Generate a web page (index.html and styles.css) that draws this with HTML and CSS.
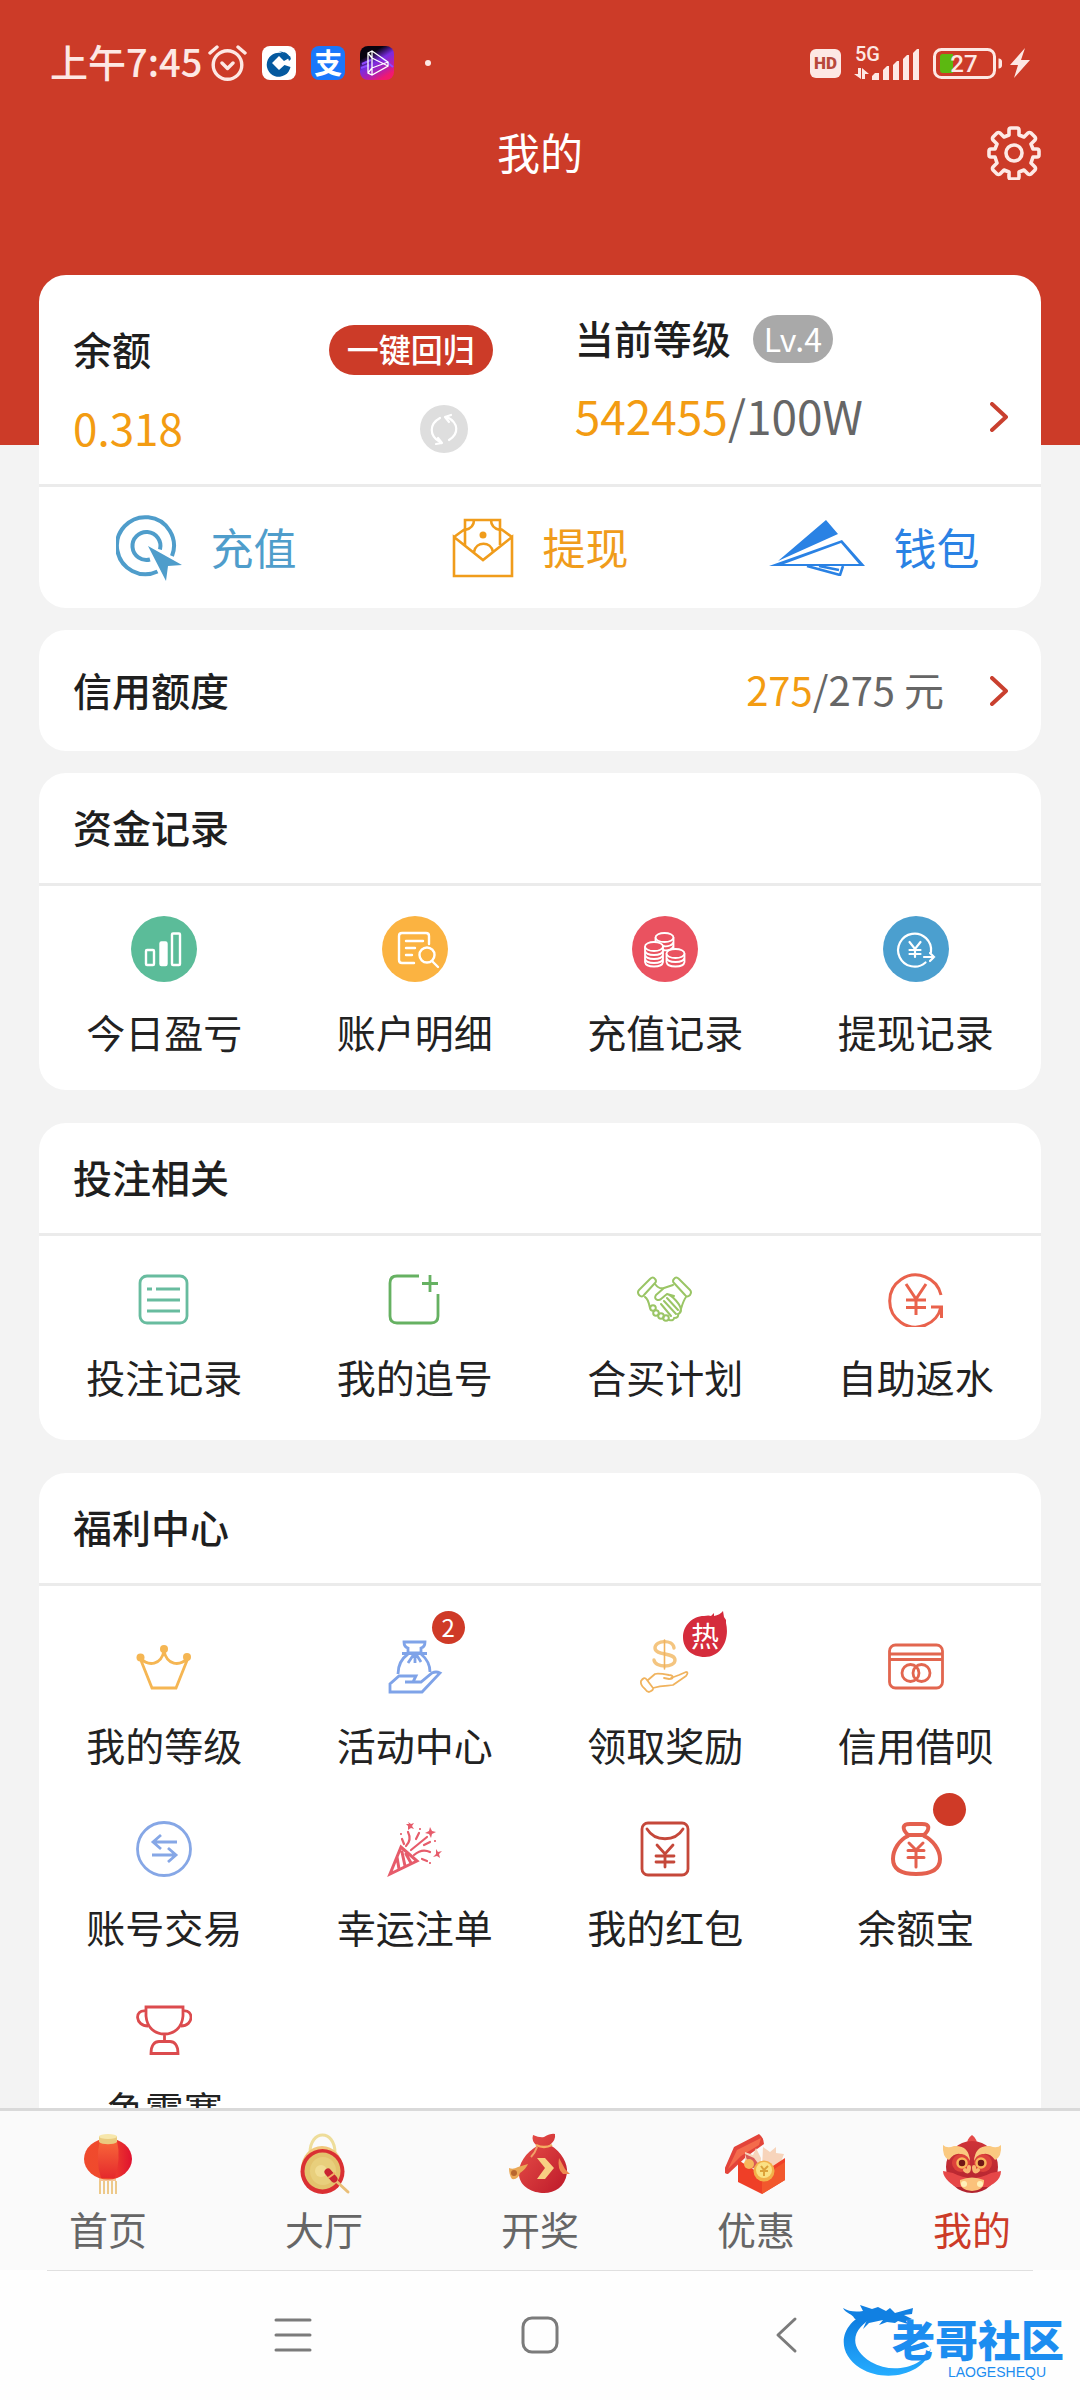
FILE: index.html
```html
<!DOCTYPE html>
<html lang="zh-CN">
<head>
<meta charset="utf-8">
<meta name="viewport" content="width=device-width, initial-scale=1">
<title>我的</title>
<link rel="stylesheet" href="styles.css">
</head>
<body>
<div class="app">
  <div class="screen">
    <header class="header">
      <div class="status">
        <div class="status-left">
          <span class="clock">上午7:45</span>
          <svg class="alarm" width="39" height="36" viewBox="0 0 39 36" fill="none" stroke="currentColor" stroke-width="3.4" stroke-linecap="round" stroke-linejoin="round"><circle cx="19.500" cy="20" r="14.300"/><path d="M2 8 9 2M37 8 30 2M14 18l5.500 5.500L25 18"/></svg>
          <svg width="34" height="34" viewBox="0 0 34 34"><rect width="34" height="34" rx="8" fill="#fff"/><path d="M23 8.500A12 12 0 1 0 28.500 21l-6-2-5.500 5-7-7 7-7 5 5 7-4z" fill="#04599f"/><path d="M17 5.500c4 0 7 1.500 9 4l-2 2c-2-3-4-5-7-6zM22 6c3 1 6 4 7 7l-2 2c-1-4-3-6-5-9z" fill="#04599f"/></svg>
          <span class="app-pay">支</span>
          <svg width="34" height="34" viewBox="0 0 34 34"><defs><linearGradient id="vg" x1="0" y1="0" x2=".6" y2="1"><stop offset=".3" stop-color="#08030f"/><stop offset=".55" stop-color="#7a2be0"/><stop offset=".8" stop-color="#b31fae"/><stop offset="1" stop-color="#f2186f"/></linearGradient></defs><rect width="34" height="34" rx="8" fill="url(#vg)"/><path d="M2 18l9-4M1 22l8-3M22 12l11 9" stroke="#8d4bff" stroke-width="2"/><path d="M8 7l4-2 16 11v4L12 29l-4-2zM12 5v24M12 22l16-6M12 12l16 8M8 7l4 5M8 27l4-5" fill="none" stroke="#fff" stroke-width="1.300"/></svg>
          <span class="dot"></span>
        </div>
        <div class="status-right">
          <span class="hd">HD</span>
          <svg class="signal" width="66" height="36" viewBox="0 0 66 36" fill="currentColor"><text class="net" x="1" y="16">5G</text><path d="M0 29h4v-6h3v11zM8 23l7 6h-4v5H8zM18 35v-4l3-3h4v7zM29 35V25l4-4h2v14zM39 35V20l4-4h2v19zM49 35V14l4-4h2v25zM59 35V8l4-4h2v31z"/></svg>
          <svg class="battery" width="70" height="31" viewBox="0 0 70 31"><rect x="1.500" y="1.500" width="60" height="28" rx="7" fill="none" stroke="currentColor" stroke-width="3"/><path d="M65.500 10.500a3 3 0 0 1 3.500 3v4a3 3 0 0 1-3.500 3z" fill="currentColor"/><path d="M9 6h11v19H9a3 3 0 0 1-2-3V8a3 3 0 0 1 2-2z" fill="#5cb811"/><text class="level" x="31" y="24" text-anchor="middle" fill="currentColor">27</text></svg>
          <svg class="bolt" width="20" height="30" viewBox="0 0 20 30" fill="currentColor"><path d="M15 0 0 17h8L4 30 20 12h-9z"/></svg>
        </div>
      </div>
      <div class="titlebar">
        <h1>我的</h1>
        <button class="icon-button gear" aria-label="设置">
          <svg width="54" height="54" viewBox="0 0 54 54" fill="none" stroke="currentColor" stroke-width="3.600" stroke-linejoin="round"><circle cx="27" cy="27" r="8"/><path d="M22 9V4q0-2 2-2h6q2 0 2 2v5l5 2 4-4q1.500-1 3 0l4 4q1 1.500 0 3l-4 4 2 5h4q2 0 2 2v4q0 2-2 2h-4l-2 6 4 4q1 1.500 0 3l-4 4q-1.500 1-3 0l-4-4-5 2v5q0 2-2 2h-6q-2 0-2-2v-5l-5-2-4 4q-1.500 1-3 0l-4-4q-1-1.500 0-3l4-4-2-6H4q-2 0-2-2v-4q0-2 2-2h4l2-5-4-4q-1-1.500 0-3l4-4q1.500-1 3 0l4 4z"/></svg>
        </button>
      </div>
    </header>

    <main class="content">
      <section class="card">
        <div class="summary">
          <div class="balance">
            <div class="row split"><h2>余额</h2><button class="pill">一键回归</button></div>
            <div class="row split"><span class="amount">0.318</span>
              <button class="icon-button refresh" aria-label="刷新"><svg width="48" height="48" viewBox="0 0 48 48"><circle cx="24" cy="24" r="24" fill="#dedede"/><path d="M20 13c-11 6-11 18 0 24m2 1-4-5m4 5-6 1M29 35c10-6 10-17-2-23m-2 0 6-2m-6 2 4 5" fill="none" stroke="#fff" stroke-width="2.200" stroke-linecap="round"/></svg></button>
            </div>
          </div>
          <div class="rank">
            <div class="row"><h2>当前等级</h2><span class="lv">Lv.4</span></div>
            <a class="row split" href="#level"><span class="points"><b>542455</b>/100W</span>
              <svg class="chevron" width="18" height="30" viewBox="0 0 18 30"><path d="M2 2l14 13L2 28"/></svg></a>
          </div>
        </div>
        <div class="actions">
          <a class="blue" href="#recharge"><svg width="66" height="66" viewBox="0 0 66 66" fill="none" stroke="currentColor" stroke-width="4"><path d="M41.500 56.500A28.500 28.500 0 1 1 56 41"/><path d="M34 44.500A14 14 0 1 1 44 34.500"/><path d="M32 31l34 19-14 1-2 15z" fill="currentColor" stroke="none"/></svg><span>充值</span></a>
          <a class="gold" href="#withdraw"><svg width="62" height="60" viewBox="0 0 62 60" fill="none" stroke="currentColor" stroke-width="2.600"><path d="M2 19l29 23 29-23v39H2zM2 19l11-8M60 19l-11-8M13 27V2h35v25M22 2q0 8-9 10M39 2q0 8 9 10M22 34c2-11 17-11 19 0"/><circle cx="31" cy="17" r="3.500" fill="currentColor" stroke="none"/></svg><span>提现</span></a>
          <a class="azure" href="#wallet"><svg width="96" height="56" viewBox="0 0 96 56"><path d="M57 0l12 14L9 41zM0 46l73-26 23 26zm15-2h75L72 23z" fill="currentColor" fill-rule="evenodd"/><path d="M38 46l33 9 3-9M50 46l20 4" fill="none" stroke="currentColor" stroke-width="2.600"/></svg><span>钱包</span></a>
        </div>
      </section>

      <section class="card">
        <a class="credit" href="#credit"><h2>信用额度</h2><span class="quota"><b>275</b>/275 元</span>
          <svg class="chevron" width="18" height="30" viewBox="0 0 18 30"><path d="M2 2l14 13L2 28"/></svg></a>
      </section>

      <section class="card funds">
        <h2 class="card-title">资金记录</h2>
        <div class="grid">
          <a href="#today"><svg width="66" height="66" viewBox="0 0 66 66"><circle cx="33" cy="33" r="33" fill="#5bbc99"/><g fill="none" stroke="#fff" stroke-width="2.400"><rect x="15" y="34" width="8" height="15" rx="1"/><rect x="29.500" y="26.500" width="6" height="22.500" rx="1" fill="#fff"/><rect x="41" y="17.500" width="8" height="31.500" rx="1"/></g></svg><span>今日盈亏</span></a>
          <a href="#detail"><svg width="66" height="66" viewBox="0 0 66 66"><circle cx="33" cy="33" r="33" fill="#fbb341"/><g fill="none" stroke="#fff" stroke-width="2.400" stroke-linecap="round"><path d="M47 28v-8q0-3-3-3H20q-3 0-3 3v24q0 3 3 3h12M24 25h17M24 32h9M24 39h6M50 45l6 6"/><circle cx="45" cy="39" r="7.500"/></g></svg><span>账户明细</span></a>
          <a href="#recharges"><svg width="66" height="66" viewBox="0 0 66 66"><circle cx="33" cy="33" r="33" fill="#ea5260"/><g fill="none" stroke="#fff" stroke-width="1.800"><ellipse cx="32.500" cy="21.500" rx="9" ry="4.500"/><path d="M23.500 21.500V27M41.500 21.500V34M31 30c5 1 10-1 10.500-4M31 34c5 1 10-1 10.500-4"/><ellipse cx="22" cy="30.500" rx="9" ry="4.500"/><path d="M13 30.500V46c1 6 17 6 18 0V30.500M13 34.500c1 6 17 6 18 0M13 38.500c1 6 17 6 18 0M13 42.500c1 6 17 6 18 0"/><ellipse cx="43.500" cy="37.500" rx="9" ry="4.500"/><path d="M34.500 37.500V46c1 6 17 6 18 0v-8.500M34.500 41.500c1 6 17 6 18 0"/></g></svg><span>充值记录</span></a>
          <a href="#withdrawals"><svg width="66" height="66" viewBox="0 0 66 66"><circle cx="33" cy="33" r="33" fill="#4b9fcf"/><g fill="none" stroke="#fff" stroke-width="2.200" stroke-linecap="round"><path d="M48 36a16.500 16.500 0 1 0-5.500 10.500M26.500 26l5.500 7 5.500-7M32 33v8M26.500 34h11M26.500 38h11M41 41h10m-4-4 4 4-4 4"/></g></svg><span>提现记录</span></a>
        </div>
      </section>

      <section class="card bets">
        <h2 class="card-title">投注相关</h2>
        <div class="grid">
          <a href="#bets"><svg width="56" height="56" viewBox="0 0 56 56" fill="none" stroke="#68bc9f" stroke-width="2.800"><rect x="4" y="5" width="47" height="47" rx="7"/><path d="M11 18h5M20 18h24M11 29h33M11 40h33"/></svg><span>投注记录</span></a>
          <a href="#chase"><svg width="56" height="56" viewBox="0 0 56 56" fill="none" stroke="#66b162" stroke-width="2.800"><path d="M32 5H10q-7 0-7 7v33q0 7 7 7h34q7 0 7-7V23M35 12.500h16M43 4v17"/></svg><span>我的追号</span></a>
          <a href="#group"><svg width="56" height="56" viewBox="0 0 56 56" fill="none" stroke="#9ac565" stroke-width="2" stroke-linecap="round" stroke-linejoin="round"><path d="M13 8q3-3 5 0 2 2 0 4L7 24q-2 3-5 0-2-3 0-5zM42 8q-3-3-5 0-2 2 0 4l11 12q2 3 5 0 2-3 0-5zM18 13c3 4 6 5 9 4l9-3M27 17l-8 7c-3 5 3 6 5 4l6-5 7 2M8 26c2 1 4 6 5 11M49 26c-3 4-4 9-6 15M30 23c5 1 14 11 14 16q0 3-3 4M30 27l11 12M27 30l12 13M24 33l10 12M41 43q1 4-4 4M37 47q0 3-5 2"/><circle cx="16" cy="37" r="2.800"/><circle cx="19" cy="42" r="2.800"/><circle cx="24" cy="45" r="2.800"/><circle cx="29" cy="47" r="2.800"/></svg><span>合买计划</span></a>
          <a href="#rebate"><svg width="56" height="56" viewBox="0 0 56 56" fill="none" stroke="#e9624c" stroke-width="3"><path d="M53 24A26 26 0 1 0 53 36M43 36h10.500v11M18 13l10 15 10-15M28 28v16M18 29h20M18 36.500h20"/></svg><span>自助返水</span></a>
        </div>
      </section>

      <section class="card welfare">
        <h2 class="card-title">福利中心</h2>
        <div class="grid">
          <a href="#rank"><svg width="56" height="56" viewBox="0 0 56 56" fill="none" stroke="#f5b653" stroke-width="2.800"><path d="M4 19l12 30h24l12-30C43 28 31 26 28 12 25 26 13 28 4 19z"/><g fill="#f5b653" stroke="none"><circle cx="4.500" cy="18.500" r="4"/><circle cx="28" cy="10" r="4"/><circle cx="51" cy="18" r="4"/></g></svg><span>我的等级</span></a>
          <a href="#events"><span class="badge count">2</span><svg width="56" height="56" viewBox="0 0 56 56" fill="none" stroke="#7fa3e8" stroke-width="2.800"><path d="M17 3h21q0 5-4 6v5H21V9q-4-1-4-6zM15 14.500h25M21 15C14 20 11 27 11 35M34 15c6 5 9 10 9 18M27 15l-6 9M28 15v9M29 15l5 8M3 53v-8l9-8h17l-3 6h-8 16l11-9q4-2 8 0L35 53z"/></svg><span>活动中心</span></a>
          <a href="#rewards"><svg class="badge hot" width="46" height="48" viewBox="0 0 46 48"><path d="M22 5q5-1 7 0l3-3v3q6-1 9-5l1 6 2 3 0 3c4 17-5 34-21 34C9 46 1 37 1 26S10 5 22 5z" fill="#d52c3c"/><text x="23" y="36" text-anchor="middle" fill="#fff">热</text></svg><svg width="56" height="56" viewBox="0 0 56 56" fill="none" stroke="#f0b35e" stroke-width="1.800" stroke-linecap="round" stroke-linejoin="round"><path d="M37 9c-1-9-19-8-19 0 0 8 20 4 20 12 0 8-20 8-21 0" stroke="#f4c580" stroke-width="3.400"/><path d="M27.500 1v29" stroke-width="1.600"/><path d="M4 42q3-5 6-1l6 8q1 2-4 4-2 0-4-3c-2-2-5-4-4-8zM11 41l7-6q3-1 14 1c4 0 6 4 0 4l-5-1M34 39l8-3 7-3q3 0 0 4L36 46c-4 1-10 0-20 3"/></svg><span>领取奖励</span></a>
          <a href="#loan"><svg width="56" height="56" viewBox="0 0 56 56" fill="none" stroke="#e2664f" stroke-width="2.800"><rect x="1.500" y="6" width="53" height="43" rx="6"/><path d="M1 15h54M1 20.500h54"/><circle cx="22.500" cy="34" r="8.500"/><circle cx="33.500" cy="34" r="8.500"/></svg><span>信用借呗</span></a>
          <a href="#trade"><svg width="56" height="56" viewBox="0 0 56 56" fill="none" stroke="#86a7e6" stroke-width="2.800"><circle cx="28" cy="28" r="26.500"/><path d="M41 21H17M25 14l-8 7 8 7M16 34h24M32 27l8 7-8 7"/></svg><span>账号交易</span></a>
          <a href="#lucky"><svg width="56" height="56" viewBox="0 0 56 56" fill="none" stroke="#e65c6b" stroke-width="2.400" stroke-linecap="round"><path d="M14 26 3 53l27-13zM10 36l2 12M15 31l3 14M19 33l5 9" stroke-width="3"/><path d="M19 25q6-6 2-14M24 29 40 16M27 34q8-7 16-3M15 18l2 5M14 13v0M29 18l3-6M33 8v0M37 24l6-3M48 20v0M35 38l5 2M43 42v0" stroke-width="2.200"/><path d="M21 1l3 2 3-1-2 3 2 3-3-1-3 2v-4l-2-2 3 0zM43 6l2 4 4 1-4 2-1 4-2-4-4-1 4-2zM49 28l2 3 4-1-3 3 1 4-3-2-4 1 3-3z" fill="#e65c6b" stroke="none"/></svg><span>幸运注单</span></a>
          <a href="#packets"><svg width="56" height="56" viewBox="0 0 56 56" fill="none" stroke="#c5483a" stroke-width="2.800" stroke-linecap="round"><rect x="5" y="2" width="46" height="52" rx="6"/><path d="M10 8c8 13 28 13 36 0M20 24l8 9 8-9M28 33v13M19 35h18M19 41h18"/></svg><span>我的红包</span></a>
          <a href="#treasure"><span class="badge"></span><svg width="56" height="56" viewBox="0 0 56 56" fill="none" stroke="#e4604e" stroke-width="4" stroke-linecap="round" stroke-linejoin="round"><path d="M20 14c-7-7-5-11 2-11h12c7 0 9 4 2 11zM20 15C11 19 5 29 5 38c0 10 7 15 23 15s24-5 24-15c0-9-7-19-16-23"/><path d="M21 22l7 7 7-7M28 29v17M20 29.500h16M20 36.500h16" stroke-width="3"/></svg><span>余额宝</span></a>
          <a href="#cup"><svg width="56" height="56" viewBox="0 0 56 56" fill="none" stroke="#dc4b4e" stroke-width="2.800"><path d="M10 4h37v9C46 25 38 31 28.500 31S11 25 10 13zM10 8C-2 6-1 23 12 23M47 8c11-2 11 15-2 15M28.500 31v7M15 50.500c0-9 4-12 8-12h11c4 0 8 3 8 12z"/></svg><span>争霸赛</span></a>
        </div>
      </section>
    </main>
  </div>

  <nav class="tabs">
    <a href="#home"><svg width="62" height="62" viewBox="0 0 62 62"><defs><linearGradient id="lan"><stop stop-color="#ef4a2d"/><stop offset=".5" stop-color="#f04a2c"/><stop offset="1" stop-color="#e0112f"/></linearGradient><linearGradient id="rib" x2="0" y2="1"><stop stop-color="#f8683a"/><stop offset="1" stop-color="#e5292c"/></linearGradient></defs><path d="M23 48v13M27 48v13M31 48v13M35 48v13M39 48v13" stroke="#edc98a" stroke-width="2"/><path d="M22 44h17v4H22z" fill="#f5c494"/><ellipse cx="31" cy="26" rx="24" ry="20.500" fill="url(#lan)"/><path d="M23 8q-5 18 1 37h14q6-20 2-37z" fill="url(#rib)"/><path d="M22 3v6c3 3 15 3 18 0V3z" fill="#eacb80"/><ellipse cx="31" cy="3.500" rx="9" ry="2.500" fill="#f7e7ac"/></svg><span>首页</span></a>
    <a href="#lobby"><svg width="62" height="62" viewBox="0 0 62 62"><path d="M17 20C17-4 42-4 42 20" fill="none" stroke="#eedd9a" stroke-width="3"/><ellipse cx="29" cy="36" rx="21" ry="23" fill="#f0c77c"/><ellipse cx="29.500" cy="38.500" rx="22" ry="22.500" fill="#da3033"/><ellipse cx="29.500" cy="38" rx="18" ry="18.500" fill="#e3c36d"/><ellipse cx="30" cy="38" rx="13" ry="14" fill="#e8cf7c"/><circle cx="28" cy="38" r="6" fill="#f1dd94"/><path d="M42 47l13 12" stroke="#e9be77" stroke-width="3" stroke-linecap="round"/><path d="M35 39l6 7" stroke="#c92531" stroke-width="7" stroke-linecap="round"/><path d="M35 45l7-5" stroke="#f3ac65" stroke-width="2"/></svg><span>大厅</span></a>
    <a href="#draw"><svg width="62" height="62" viewBox="0 0 62 62"><defs><linearGradient id="sack" x1="0" y1="0" x2="1" y2="1"><stop stop-color="#e9534a"/><stop offset="1" stop-color="#bd1829"/></linearGradient></defs><path d="M24 2q7 3 11 2 7-4 11-3 1 6-5 11c12 7 18 19 17 28-2 14-12 20-23 20S11 54 10 42C9 30 17 20 28 13q-6-5-4-11z" fill="url(#sack)"/><path d="M27 12q8 4 16 0" stroke="#f5ad62" stroke-width="2.500" fill="none"/><path d="M28 14q-2 6-6 10" stroke="#f2a068" stroke-width="2" fill="none"/><path d="M28 25h8l9 10-9 11h-8l8-11z" fill="#f8cf82"/><path d="M0 35q4 2 9-1l10-3q-2 5-8 9-2 7-8 6-3-4-3-11z" fill="#eaa857"/><path d="M50 25q-2 11 4 16l7 0-5-5z" fill="#ee8b51"/><circle cx="5" cy="40" r="3" fill="#b9672f"/></svg><span>开奖</span></a>
    <a href="#offers"><svg width="62" height="62" viewBox="0 0 62 62"><path d="M9 14 34 1q5 4 5 10L21 24 3 41q-4 0-4-4z" fill="#e3443a"/><path d="M12 17 36 5l-2 7-18 11L3 36z" fill="#f46b4c"/><path d="M20 19l8 3 3-7 5 10-1 12-15-3zM38 14l7 5 6-5 0 6 8 1-5 13-17 2z" fill="#f7d4bb"/><path d="M20 21l9 4 6 8-10 3z" fill="#d95a55"/><path d="M13 27l23 14 24-16v22L37 61 13 49z" fill="#ef3f27"/><path d="M37 44l23-15v18L37 61z" fill="#f2582d"/><circle cx="24" cy="31" r="5" fill="#f6b65c"/><circle cx="39" cy="38" r="10.500" fill="#f2b04a"/><circle cx="39" cy="37" r="8" fill="#fae184"/><path d="M36 33l3 4 4-4M39 37v6M35 38h8" fill="none" stroke="#dca23a" stroke-width="2"/></svg><span>优惠</span></a>
    <a class="active" href="#mine"><svg width="62" height="62" viewBox="0 0 62 62"><defs><linearGradient id="lion" x2="0" y2="1"><stop stop-color="#ce3338"/><stop offset="1" stop-color="#b0222e"/></linearGradient></defs><path d="M26 14q-1-8 5-12 6 4 5 12z" fill="#e54a48"/><circle cx="31" cy="34" r="26" fill="url(#lion)"/><path d="M2 38l10 2q19 10 38 0l10-2c0 10-10 14-13 16H15C12 52 2 46 2 38z" fill="#e64748"/><path d="M2 12q4 4 11 1 15-1 16 15l-5-5q-9-6-16 4-7-3-6-15zM60 12q-4 4-11 1-15-1-16 15l5-5q9-6 16 4 7-3 6-15z" fill="#fac980"/><circle cx="20" cy="30" r="9" fill="#dd423b"/><circle cx="42" cy="30" r="9" fill="#dd423b"/><g stroke="#f9b55c" stroke-width="2.500" fill="#711616"><circle cx="21" cy="30" r="4.500"/><circle cx="40" cy="30" r="4.500"/></g><path d="M24 37q4 4 4-3M37 37q-4 4-4-3" stroke="#f9b873" stroke-width="4" stroke-linecap="round" fill="none"/><path d="M19 47q12-5 24 0 1 10-12 11-13-1-12-11z" fill="#fbc27b"/><circle cx="23" cy="51" r="3" fill="#fff1b8"/><circle cx="39" cy="51" r="3" fill="#fff1b8"/></svg><span>我的</span></a>
  </nav>

  <footer class="sysnav">
    <button class="icon-button" aria-label="最近任务"><svg width="38" height="38" viewBox="0 0 38 38"><path d="M2 4h34M2 19h34M2 34h34"/></svg></button>
    <button class="icon-button" aria-label="主屏幕"><svg width="38" height="38" viewBox="0 0 38 38"><rect x="2" y="2" width="34" height="34" rx="9"/></svg></button>
    <button class="icon-button" aria-label="返回"><svg width="38" height="38" viewBox="0 0 38 38"><path d="M27 3 10 19l17 16"/></svg></button>
    <div class="watermark">
      <svg width="92" height="74" viewBox="0 0 92 74"><defs><linearGradient id="dr" x2="0" y2="1"><stop stop-color="#0b76dc"/><stop offset="1" stop-color="#26adff"/></linearGradient></defs><path d="M30 8C-2 18-8 48 18 65c26 16 66 6 71-20-8 19-38 27-60 14C4 43 11 24 34 13z" fill="url(#dr)"/><path d="M1 5q8 5 20 3L18 2l12 4 6-2 8 4 4-3 5 5 18-5-1 6-8 1 8 4-6 2 2 3-10-3-3 2-8-1-8 3 4-5-14 3-6 6 4-9-8 2-5-4C12 12 3 10 1 5z" fill="#1180e2"/></svg>
      <p class="wm-name">老哥社区</p>
      <p class="wm-latin">LAOGESHEQU</p>
    </div>
  </footer>
</div>
</body>
</html>
```
FILE: styles.css
```css
* { box-sizing: border-box; }

body {
  margin: 0;
  background: #f3f3f3;
  color: #222;
  font-family: "Noto Sans CJK SC", "Noto Sans", sans-serif;
  font-size: 39px;
  line-height: 46px;
}

h1, h2, p { margin: 0; font-weight: 500; }
h2 { font-size: 39px; color: #1f1f1f; }
a { color: inherit; text-decoration: none; }
b { font-weight: 400; color: #f39c12; }
svg { display: block; flex: none; }
button { font: inherit; border: 0; margin: 0; cursor: pointer; }
.icon-button { padding: 0; background: none; color: inherit; }

.app {
  display: flex;
  flex-direction: column;
  height: 100vh;
}
.screen { flex: 1; min-height: 0; overflow: hidden; }

/* header */
.header {
  background: #cc3b28;
  color: #fff;
  padding-bottom: 267px;
}
.status {
  display: flex;
  justify-content: space-between;
  align-items: center;
  height: 126px;
  padding: 0 50px;
  color: #fde8e4;
}
.status-left { display: flex; align-items: center; gap: 15px; }
.status-right { display: flex; align-items: center; gap: 13px; }
.clock { margin-right: -9px; padding-bottom: 4px; font-size: 38px; font-weight: 500; }
.app-pay {
  width: 34px;
  height: 34px;
  border-radius: 8px;
  background: #1a77fb;
  color: #fff;
  font-size: 28px;
  font-weight: 700;
  line-height: 32px;
  text-align: center;
}
.dot { width: 6px; height: 6px; margin-left: 16px; border-radius: 50%; background: currentColor; }
.hd {
  width: 31px;
  height: 29px;
  border-radius: 6px;
  background: #fde8e4;
  color: #b8483b;
  font: 900 17px/29px Roboto, sans-serif;
  text-align: center;
}
.signal { overflow: visible; }
.net { font: 500 20px Roboto, sans-serif; }
.level { font: 500 24px Roboto, sans-serif; }
.bolt { margin-left: -6px; }
.titlebar {
  display: grid;
  grid-template-columns: 1fr auto 1fr;
  align-items: center;
  height: 52px;
  padding: 0 39px;
}
.titlebar h1 { grid-column: 2; padding-bottom: 4px; font-size: 43px; font-weight: 400; }
.gear { justify-self: end; color: #fdeae6; }

/* cards */
.content {
  display: flex;
  flex-direction: column;
  gap: 22px;
  margin-top: -170px;
  padding: 0 39px;
}
.card { background: #fff; border-radius: 27px; }
.bets, .welfare { margin-top: 11px; }
.card .card-title {
  padding: 30px 34px 34px;
  border-bottom: 3px solid #ebebeb;
}
.row { display: flex; align-items: center; }
.row h2, .credit h2, .amount, .points, .quota, .actions span { padding-bottom: 4px; }
.split { justify-content: space-between; }

.summary {
  display: grid;
  grid-template-columns: 31fr 32fr;
  column-gap: 82px;
  padding: 0 33px 0 34px;
  border-bottom: 3px solid #ebebeb;
}
.balance { display: grid; gap: 30px; padding: 50px 0 31px; }
.balance .row { height: 50px; }
.balance .row:last-child { height: 48px; }
.rank { display: grid; gap: 30px; align-content: start; padding-top: 40px; }
.rank .row { height: 48px; }
.pill {
  height: 50px;
  padding: 0 18px 4px;
  border-radius: 25px;
  background: #cc3b28;
  color: #fff;
  font-size: 32px;
  font-weight: 500;
}
.amount { font-size: 44px; color: #f39c12; }
.points { font-size: 46px; color: #666; }
.refresh { margin-right: 25px; }
.lv {
  height: 48px;
  margin-left: 22px;
  padding: 0 11px;
  border-radius: 24px;
  background: #a9a9a9;
  color: #fff;
  font-size: 32px;
}
.chevron { fill: none; stroke: #c9402f; stroke-width: 4; stroke-linecap: round; stroke-linejoin: round; }

.actions { display: grid; grid-template-columns: repeat(3, 1fr); height: 121px; }
.actions a {
  display: flex;
  align-items: center;
  justify-content: center;
  gap: 29px;
  font-size: 43px;
}
.blue { color: #4f9dcb; }
.gold { color: #f09c1b; }
.azure { color: #2a82e4; }

.credit {
  display: flex;
  align-items: center;
  height: 121px;
  padding: 0 33px 0 34px;
}
.quota { margin-left: auto; margin-right: 46px; font-size: 40px; color: #666; }

/* icon grids */
.grid { display: grid; grid-template-columns: repeat(4, 1fr); row-gap: 54px; }
.grid a {
  position: relative;
  display: flex;
  flex-direction: column;
  align-items: center;
  gap: 26px;
}
.funds .grid { padding: 30px 0 36px; }
.bets .grid { padding: 35px 0 41px; }
.welfare .grid { padding: 53px 0 50px; }
.badge {
  position: absolute;
  top: -28px;
  left: calc(50% + 17px);
  width: 33px;
  height: 33px;
  border-radius: 50%;
  background: #cf3a27;
  color: #fff;
}
.count { font-size: 24px; line-height: 31px; text-align: center; }
.hot { width: 46px; height: 48px; border-radius: 0; background: none; font-size: 28px; }

/* bottom bars */
.tabs {
  display: grid;
  grid-template-columns: repeat(5, 1fr);
  padding: 22px 0 19px;
  border-top: 3px solid #d9d9d9;
  background: #fafafa;
  color: #666;
}
.tabs a { display: flex; flex-direction: column; align-items: center; gap: 10px; }
.tabs .active { color: #cc3b28; }

.sysnav {
  position: relative;
  display: flex;
  justify-content: center;
  align-items: center;
  gap: 209px;
  height: 130px;
  background: #fefefe;
}
.sysnav::before {
  content: "";
  position: absolute;
  top: 0;
  left: 47px;
  right: 47px;
  height: 1px;
  background: #e0e0e0;
}
.sysnav button svg { fill: none; stroke: #7b7b7b; stroke-width: 3; stroke-linecap: round; stroke-linejoin: round; }
.watermark {
  position: absolute;
  top: 33px;
  right: 16px;
  width: 222px;
  height: 74px;
  color: #1c8df0;
}
.wm-name {
  position: absolute;
  top: 14px;
  right: 0;
  font-size: 43px;
  font-weight: 900;
  line-height: 42px;
}
.wm-latin {
  position: absolute;
  top: 62px;
  right: 18px;
  font: 14px/14px "Liberation Sans", sans-serif;
}
```
